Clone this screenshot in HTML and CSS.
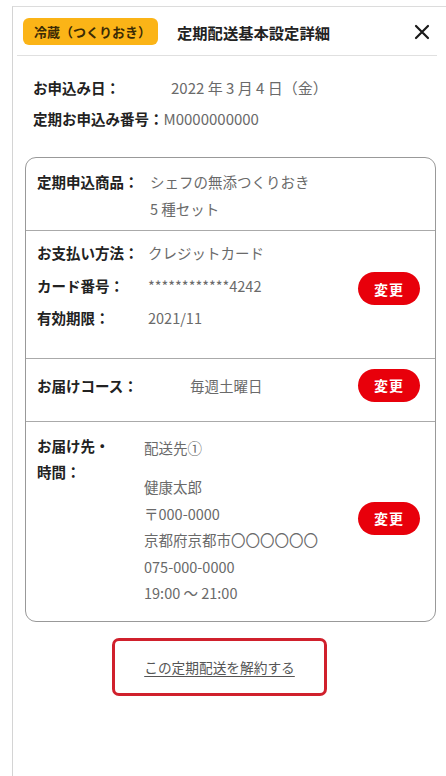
FILE: index.html
```html
<!DOCTYPE html>
<html lang="ja">
<head>
  <meta charset="UTF-8">
  <title>定期配送基本設定詳細</title>
  <link rel="stylesheet" href="styles.css">
</head>
<body>

  <div class="panel">

    <div class="cabecera">
      <span class="etiqueta">冷蔵（つくりおき）</span>
      <span class="titulo">定期配送基本設定詳細</span>
      <svg class="cerrar" width="16" height="16" viewBox="0 0 16 16">
        <path d="M2 2 L14 14 M14 2 L2 14" stroke="#1a1a1a" stroke-width="2.2" stroke-linecap="round" fill="none"/>
      </svg>
    </div>

    <div class="resumen">
      <div><b class="ancho">お申込み日：</b><span class="valor">2022 年 3 月 4 日（金）</span></div>
      <div><b>定期お申込み番号：</b><span class="valor">M0000000000</span></div>
    </div>

    <div class="tarjeta">
      <!-- 商品 -->
      <div class="fila fila-producto">
        <b class="rotulo">定期申込商品：</b>
        <div class="valor">シェフの無添つくりおき<br>5 種セット</div>
      </div>

      <!-- 支払い -->
      <div class="fila fila-pago">
        <div class="lista">
          <div><b class="rotulo">お支払い方法：</b><span class="valor">クレジットカード</span></div>
          <div><b class="rotulo">カード番号：</b><span class="valor">************4242</span></div>
          <div><b class="rotulo">有効期限：</b><span class="valor">2021/11</span></div>
        </div>
        <button class="cambiar">変更</button>
      </div>

      <!-- コース -->
      <div class="fila fila-curso">
        <b class="rotulo">お届けコース：</b>
        <span class="valor">毎週土曜日</span>
        <button class="cambiar">変更</button>
      </div>

      <!-- 届け先 -->
      <div class="fila fila-envio">
        <b class="rotulo">お届け先・<br>時間：</b>
        <div class="valor">
          <div class="destino">配送先①</div>
          <div>健康太郎</div>
          <div>〒000-0000</div>
          <div>京都府京都市〇〇〇〇〇〇</div>
          <div>075-000-0000</div>
          <div>19:00 ～ 21:00</div>
        </div>
        <button class="cambiar">変更</button>
      </div>
    </div>

    <div class="cancelar">
      <a href="#">この定期配送を解約する</a>
    </div>

  </div>

</body>
</html>
```

FILE: styles.css
```css
body {
  margin: 0;
  font-family: "Noto Sans CJK JP", "Noto Sans", sans-serif;
  background: #fff;
  color: #222;
}
.panel {
  margin: 6px 0 0 12px;
  border-left: 1px solid #d4d4d4;
  border-top: 1px solid #dcdcdc;
  min-height: 770px;
}
.cabecera {
  display: flex;
  align-items: center;
  margin: 0 9px 0 4px;
  padding: 11px 6px 10px;
  border-bottom: 1px solid #e0e0e0;
}
.etiqueta {
  background-color: #fbb417;
  color: #3b2b05;
  font-size: 13px;
  font-weight: bold;
  height: 27px;
  line-height: 27px;
  padding: 0 7px 0 11px;
  border-radius: 6px;
}
.titulo {
  margin-left: 19px;
  font-size: 15.3px;
  font-weight: bold;
  color: #222;
}
.cerrar {
  margin-left: auto;
  margin-right: 1px;
}
.resumen {
  padding: 16px 0 0 20px;
  font-size: 14.5px;
  line-height: 31px;
}
.resumen .ancho {
  display: inline-block;
  width: 138px;
}
.resumen .valor {
  font-size: 15px;
}
.valor {
  color: #6a6a6a;
}
.tarjeta {
  margin: 23px 10px 0 12px;
  border: 1px solid #999;
  border-radius: 11px;
  font-size: 14.5px;
}
.fila {
  display: flex;
  align-items: flex-start;
  padding: 0 15px 0 11px;
  border-top: 1px solid #aaa;
}
.fila:first-child {
  border-top: none;
}
.rotulo {
  color: #222;
}
.fila-producto {
  padding-top: 10px;
  padding-bottom: 8px;
  line-height: 27px;
}
.fila-producto .rotulo {
  width: 113px;
}
.fila-pago {
  align-items: center;
  padding-top: 6px;
  padding-bottom: 23px;
  line-height: 32.5px;
}
.fila-pago .lista {
  flex: 1;
}
.fila-pago .rotulo {
  display: inline-block;
  width: 111px;
}
.fila-pago .cambiar {
  margin-top: 6px;
}
.fila-curso {
  align-items: center;
  padding-top: 10px;
  padding-bottom: 19px;
  line-height: 27px;
}
.fila-curso .rotulo {
  width: 153px;
}
.fila-curso .valor {
  flex: 1;
}
.fila-envio {
  align-items: center;
  padding-top: 11px;
  padding-bottom: 14px;
  line-height: 26.5px;
}
.fila-envio .rotulo {
  align-self: flex-start;
  width: 107px;
}
.fila-envio .valor {
  flex: 1;
  padding-top: 2px;
}
.fila-envio .destino {
  margin-bottom: 13px;
}
.fila-envio .cambiar {
  margin-top: -3px;
}
.cambiar {
  width: 62px;
  height: 33px;
  border: none;
  border-radius: 17px;
  background-color: #e8000b;
  color: #fff;
  font-family: inherit;
  font-size: 14px;
  font-weight: bold;
  letter-spacing: 1px;
  cursor: pointer;
}
.cancelar {
  width: 209px;
  height: 52px;
  margin: 16px 0 0 99px;
  border: 3px solid #d0202c;
  border-radius: 7px;
  display: flex;
  align-items: center;
  justify-content: center;
}
.cancelar a {
  color: #555;
  font-size: 13.7px;
  text-decoration: underline;
  text-underline-offset: 3px;
}
```
